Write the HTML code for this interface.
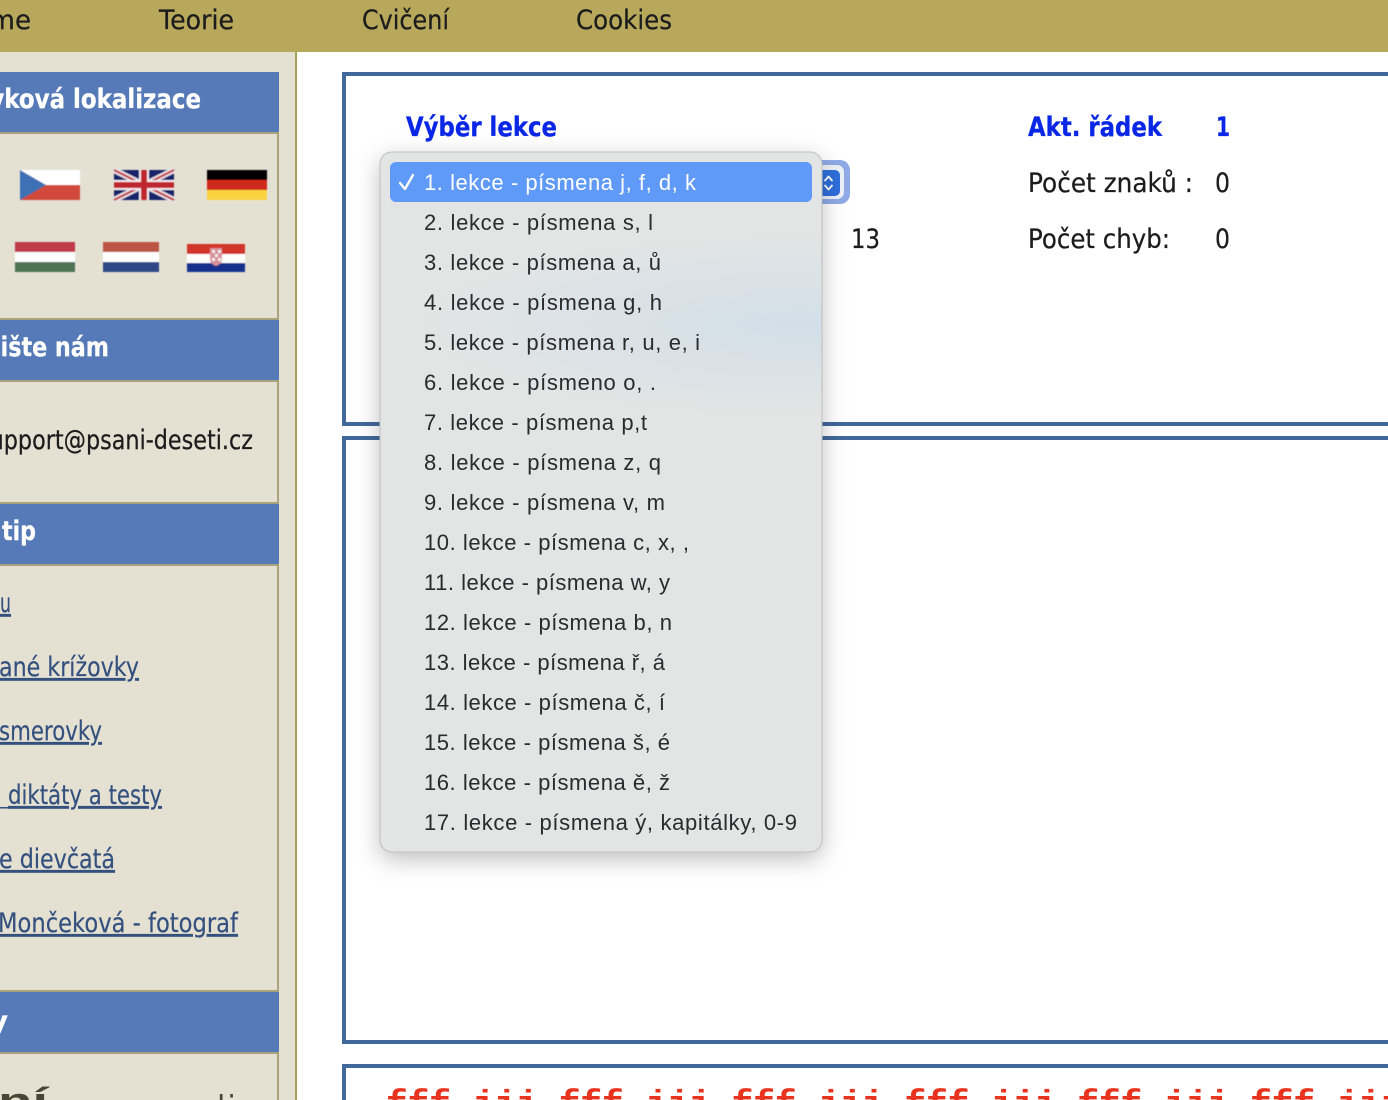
<!DOCTYPE html>
<html lang="cs"><head><meta charset="utf-8"><title>Psaní deseti</title>
<style>
html,body{margin:0;padding:0;background:#fff;width:1388px;height:1100px;overflow:hidden}
svg{display:block}
.t{font-family:"DejaVu Sans","Liberation Sans",sans-serif;font-size:27px;fill:#1c1c1c;stroke:#1c1c1c;stroke-width:.25px}
.h{font-family:"DejaVu Sans","Liberation Sans",sans-serif;font-size:27px;font-weight:bold;fill:#fff;stroke:#fff;stroke-width:.3px}
.b{font-family:"DejaVu Sans","Liberation Sans",sans-serif;font-size:27px;font-weight:bold;fill:#0b27e6;stroke:#0b27e6;stroke-width:.3px}
.l{font-family:"DejaVu Sans","Liberation Sans",sans-serif;font-size:27px;fill:#34507e;stroke:#34507e;stroke-width:.2px;text-decoration:underline}
.m{font-family:"Liberation Sans",sans-serif;font-size:22px;fill:#2a2b2c}
.r{font-family:"Liberation Mono",monospace;font-size:36px;font-weight:bold;fill:#e8341f}
</style></head><body>
<svg xmlns="http://www.w3.org/2000/svg" width="1388" height="1100" viewBox="0 0 1388 1100">
<defs>
<filter id="s" x="-20%" y="-20%" width="140%" height="140%"><feDropShadow dx="0" dy="7" stdDeviation="12" flood-color="#000" flood-opacity=".26"/></filter>
<filter id="f" x="-5%" y="-5%" width="110%" height="110%"><feGaussianBlur stdDeviation=".45"/></filter>
<radialGradient id="g"><stop offset="0" stop-color="#d2dee8"/><stop offset=".6" stop-color="#dce3e6" stop-opacity=".75"/><stop offset="1" stop-color="#e3e5e4" stop-opacity="0"/></radialGradient>
<clipPath id="mc"><rect x="380" y="152" width="442" height="700" rx="12"/></clipPath>
</defs>
<rect width="1388" height="52" fill="#b7a85c"/>
<text class="t" x="-46" y="29" textLength="77" lengthAdjust="spacingAndGlyphs">Home</text>
<text class="t" x="159" y="29" textLength="75" lengthAdjust="spacingAndGlyphs">Teorie</text>
<text class="t" x="362" y="29" textLength="87" lengthAdjust="spacingAndGlyphs">Cvičení</text>
<text class="t" x="576" y="29" textLength="96" lengthAdjust="spacingAndGlyphs">Cookies</text>

<rect y="52" width="295" height="1048" fill="#e4e1d3"/>
<rect x="295" y="52" width="2" height="1048" fill="#a9a255"/>
<rect x="277" y="72" width="2" height="1028" fill="#a9a27b"/>
<g fill="#a9a27b"><rect y="132" width="279" height="2"/><rect y="318" width="279" height="2"/><rect y="380" width="279" height="2"/><rect y="502" width="279" height="2"/><rect y="564" width="279" height="2"/><rect y="990" width="279" height="2"/><rect y="1052" width="279" height="2"/></g>
<g fill="#567ab7"><rect y="72" width="279" height="60"/><rect y="320" width="279" height="60"/><rect y="504" width="279" height="60"/><rect y="992" width="279" height="60"/></g>
<text class="h" x="-48" y="108" textLength="249" lengthAdjust="spacingAndGlyphs">Jazyková lokalizace</text>
<text class="h" x="-49" y="356" textLength="158" lengthAdjust="spacingAndGlyphs">Napište nám</text>
<text class="h" x="2" y="540" textLength="34" lengthAdjust="spacingAndGlyphs">tip</text>
<text class="h" x="-10" y="1030" textLength="18" lengthAdjust="spacingAndGlyphs">y</text>

<!-- flags -->
<g filter="url(#f)">
<g><rect x="20" y="170" width="60" height="15" fill="#fff"/><rect x="20" y="185" width="60" height="15" fill="#d14a3b"/><path d="M20 170L46 185 20 200Z" fill="#3c6fb4"/></g>
<g><rect x="114" y="170" width="60" height="30" fill="#14236b"/><path d="M114 170L174 200M174 170L114 200" stroke="#e8e0e4" stroke-width="6"/><path d="M114 170L174 200M174 170L114 200" stroke="#c0303a" stroke-width="2"/><path d="M144 170V200M114 185H174" stroke="#f0e8ea" stroke-width="10"/><path d="M144 170V200M114 185H174" stroke="#c0272d" stroke-width="6"/></g>
<g><rect x="207" y="170" width="60" height="10" fill="#000"/><rect x="207" y="180" width="60" height="10" fill="#d02a1a"/><rect x="207" y="190" width="60" height="10" fill="#fbd23f"/></g>
<g><rect x="15" y="242" width="60" height="10" fill="#c03a48"/><rect x="15" y="252" width="60" height="10" fill="#fff"/><rect x="15" y="262" width="60" height="10" fill="#4f7355"/></g>
<g><rect x="103" y="242" width="56" height="10" fill="#bd5445"/><rect x="103" y="252" width="56" height="10" fill="#fff"/><rect x="103" y="262" width="56" height="10" fill="#2e4a85"/></g>
<g><rect x="187" y="244" width="58" height="10" fill="#d2352b"/><rect x="187" y="254" width="58" height="9" fill="#fff"/><rect x="187" y="263" width="58" height="9" fill="#12328c"/><path d="M210 248H222V259Q222 264 216 266 210 264 210 259Z" fill="#d98f98"/><path d="M212 250h3v3h-3zM218 250h3v3h-3zM215 254h3v3h-3zM212 258h3v3h-3zM218 258h3v3h-3z" fill="#eee"/></g>
</g>

<text class="t" x="-22" y="449" textLength="275" lengthAdjust="spacingAndGlyphs">support@psani-deseti.cz</text>
<text class="l" x="0" y="612" textLength="11" lengthAdjust="spacingAndGlyphs">u</text>
<text class="l" x="-1" y="676" textLength="140" lengthAdjust="spacingAndGlyphs">ané krížovky</text>
<text class="l" x="-1" y="740" textLength="103" lengthAdjust="spacingAndGlyphs">smerovky</text>
<text class="l" x="8" y="804" textLength="154" lengthAdjust="spacingAndGlyphs">diktáty a testy</text>
<rect x="0" y="807" width="8" height="1.5" fill="#34507e"/>
<text class="l" x="-1" y="868" textLength="116" lengthAdjust="spacingAndGlyphs">e dievčatá</text>
<text class="l" x="-2" y="932" textLength="240" lengthAdjust="spacingAndGlyphs">Mončeková - fotograf</text>
<text x="-2" y="1113" style="font:bold 36px 'Liberation Sans',sans-serif;fill:#4a4636" textLength="50" lengthAdjust="spacingAndGlyphs">ní</text>
<text x="217" y="1117" style="font:30px 'DejaVu Sans',sans-serif;fill:#4a4636" letter-spacing="2">li</text>

<!-- boxes -->
<g fill="none" stroke="#41689a" stroke-width="4">
<rect x="344" y="74" width="1100" height="350"/>
<rect x="344" y="438" width="1100" height="604"/>
<rect x="344" y="1066" width="1100" height="100"/>
</g>
<text class="b" x="406" y="136" textLength="151" lengthAdjust="spacingAndGlyphs">Výběr lekce</text>
<text class="b" x="1028" y="136" textLength="134" lengthAdjust="spacingAndGlyphs">Akt. řádek</text>
<text class="b" x="1216" y="136" textLength="14" lengthAdjust="spacingAndGlyphs">1</text>
<text class="t" x="1028" y="192" textLength="165" lengthAdjust="spacingAndGlyphs">Počet znaků :</text>
<text class="t" x="1215" y="192" textLength="15" lengthAdjust="spacingAndGlyphs">0</text>
<text class="t" x="1028" y="248" textLength="142" lengthAdjust="spacingAndGlyphs">Počet chyb:</text>
<text class="t" x="1215" y="248" textLength="15" lengthAdjust="spacingAndGlyphs">0</text>
<text class="t" x="851" y="248" textLength="29" lengthAdjust="spacingAndGlyphs">13</text>
<text class="r" x="386" y="1115" xml:space="preserve">fff jjj fff jjj fff jjj fff jjj fff jjj fff jjj</text>

<!-- select control -->
<rect x="800" y="160" width="50" height="44" rx="10" fill="#8faae6"/>
<rect x="800" y="165" width="44" height="34" rx="7" fill="#eef1f8"/>
<rect x="800" y="170" width="40" height="26" rx="5" fill="#2f6fdb"/>
<path d="M825 180.5L828.5 176.5 832 180.5M825 185.5L828.5 189.5 832 185.5" fill="none" stroke="#fff" stroke-width="1.8" stroke-linecap="round" stroke-linejoin="round"/>

<!-- popup menu -->
<rect x="380" y="152" width="442" height="700" rx="12" fill="#e3e5e4" filter="url(#s)"/>
<g clip-path="url(#mc)"><ellipse cx="800" cy="325" rx="460" ry="110" fill="url(#g)"/></g>
<rect x="380" y="152" width="442" height="700" rx="12" fill="none" stroke="#bfc0bf" stroke-width="1"/>
<rect x="390" y="162" width="422" height="40" rx="6" fill="#5f9af8"/>
<path d="M400 183L405 189 413 175" fill="none" stroke="#fff" stroke-width="2.4" stroke-linecap="round" stroke-linejoin="round"/>
<text class="m" x="424" y="190" textLength="272" lengthAdjust="spacing" style="fill:#fff">1. lekce - písmena j, f, d, k</text>
<text class="m" x="424" y="230" textLength="229" lengthAdjust="spacing">2. lekce - písmena s, l</text>
<text class="m" x="424" y="270" textLength="237" lengthAdjust="spacing">3. lekce - písmena a, ů</text>
<text class="m" x="424" y="310" textLength="238" lengthAdjust="spacing">4. lekce - písmena g, h</text>
<text class="m" x="424" y="350" textLength="276" lengthAdjust="spacing">5. lekce - písmena r, u, e, i</text>
<text class="m" x="424" y="390" textLength="232" lengthAdjust="spacing">6. lekce - písmeno o, .</text>
<text class="m" x="424" y="430" textLength="223" lengthAdjust="spacing">7. lekce - písmena p,t</text>
<text class="m" x="424" y="470" textLength="237" lengthAdjust="spacing">8. lekce - písmena z, q</text>
<text class="m" x="424" y="510" textLength="241" lengthAdjust="spacing">9. lekce - písmena v, m</text>
<text class="m" x="424" y="550" textLength="265" lengthAdjust="spacing">10. lekce - písmena c, x, ,</text>
<text class="m" x="424" y="590" textLength="246" lengthAdjust="spacing">11. lekce - písmena w, y</text>
<text class="m" x="424" y="630" textLength="248" lengthAdjust="spacing">12. lekce - písmena b, n</text>
<text class="m" x="424" y="670" textLength="241" lengthAdjust="spacing">13. lekce - písmena ř, á</text>
<text class="m" x="424" y="710" textLength="241" lengthAdjust="spacing">14. lekce - písmena č, í</text>
<text class="m" x="424" y="750" textLength="246" lengthAdjust="spacing">15. lekce - písmena š, é</text>
<text class="m" x="424" y="790" textLength="246" lengthAdjust="spacing">16. lekce - písmena ě, ž</text>
<text class="m" x="424" y="830" textLength="373" lengthAdjust="spacing">17. lekce - písmena ý, kapitálky, 0-9</text>
</svg>
</body></html>
